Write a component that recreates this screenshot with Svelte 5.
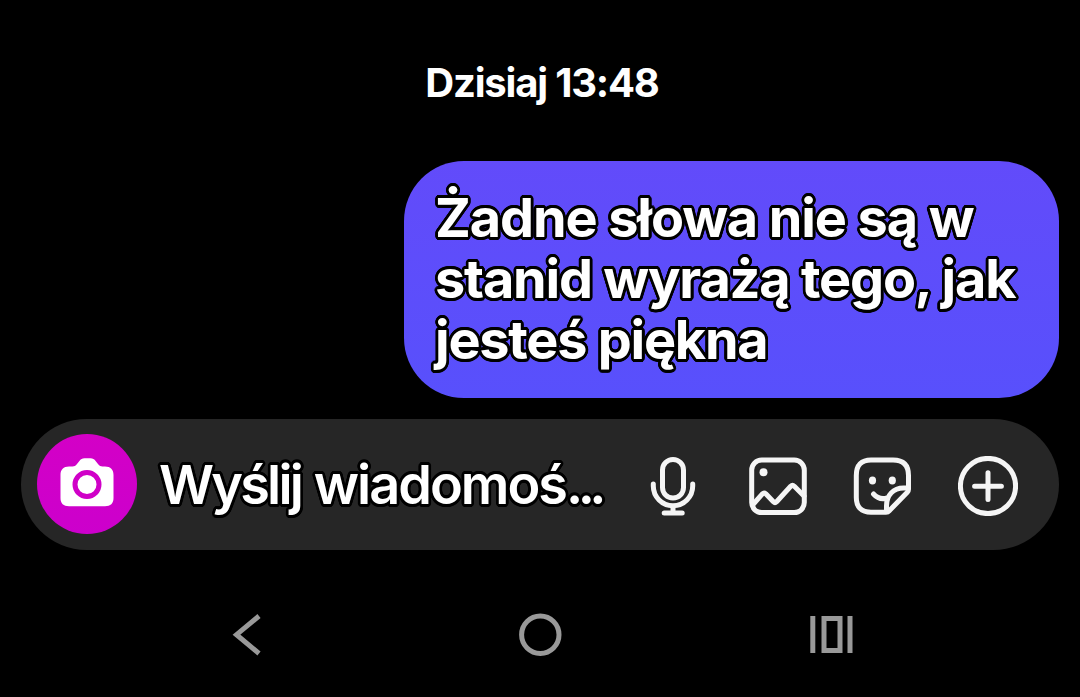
<script>
  // line breaks are fixed, tracking is tuned per line
  const lines = [
    { text: 'Żadne słowa nie są w', tracking: -1.1 },
    { text: 'stanid wyrażą tego, jak', tracking: -1.2 },
    { text: 'jesteś piękna', tracking: -1.25 },
  ];
</script>

<div class="screen">
  <div class="timestamp"><span>Dzisiaj 13:48</span></div>

  <div class="message">
    {#each lines as line}
      <span class="line outlined" style="letter-spacing: {line.tracking}px">{line.text}</span>
    {/each}
  </div>

  <div class="composer">
    <button class="camera" aria-label="Aparat">
      <svg width="54" height="49" viewBox="0 0 54 49">
        <path
          fill="#fff"
          d="M9 8.500h3.500c2 0 3-.5 4.300-2.200l2.400-3C20.800 1.100 22.200.3 24.500.3h6c2.300 0 3.700.8 5.300 3l2.400 3c1.300 1.700 2.300 2.200 4.300 2.200h2.500c5.500 0 8.500 3 8.500 8.500v23c0 5.500-3 8.200-8.500 8.200H9c-5.500 0-8.500-2.700-8.500-8.200V17c0-5.500 3-8.500 8.500-8.500z"
        />
        <circle cx="27" cy="26.500" r="12" fill="none" stroke="#d000c8" stroke-width="5" />
      </svg>
    </button>

    <div class="placeholder outlined"><span class="first">Wyślij</span> wiadomoś<span class="dots">...</span></div>

    <div class="actions">
      <svg width="60" height="60" viewBox="0 0 60 60">
        <rect x="19.500" y="3.500" width="21" height="38.500" rx="10.500" />
        <path d="M10.300 28v2a19.700 19.700 0 0 0 39.400 0v-2M30 50.500v6.500M21.200 57h18" />
      </svg>
      <svg width="60" height="60" viewBox="0 0 60 60">
        <rect x="3.700" y="4" width="52.600" height="52.600" rx="10" />
        <circle class="solid" cx="15.500" cy="16.300" r="4" />
        <path d="M5 48.500l9.400-10.700q1.700-1.500 3.400 0l7.600 8q1.600 1.500 3.200 0L42.700 30.200q1.800-1.700 3.600 0L56 40" />
      </svg>
      <svg width="60" height="60" viewBox="0 0 60 60">
        <path
          d="M18 4h22c10.500 0 15.500 5 15.500 15.500v13.800q0 1.700-1.200 2.900L36.500 54.500q-1.500 1.700-3.500 1.700H18c-9.500 0-14.700-5-14.700-14.700v-22C3.300 9 8.500 4 18 4z"
        />
        <path d="M33.500 55V50c0-11 7-18 17-18h3.500M20.500 38c4 4.500 8.500 5.500 13.500 4" />
        <ellipse class="solid" cx="19.500" cy="24.500" rx="3.600" ry="3.900" />
        <ellipse class="solid" cx="39.300" cy="24.500" rx="3.600" ry="3.900" />
      </svg>
      <svg width="60" height="60" viewBox="0 0 60 60">
        <circle cx="30" cy="30" r="27.600" />
        <path d="M30 16.800v26.800M16.600 30.200h26.800" />
      </svg>
    </div>
  </div>

  <nav class="navbar">
    <svg width="80" height="44" viewBox="0 0 80 44">
      <path d="M50 3L27.500 21.700 50 40.500" />
    </svg>
    <svg width="80" height="44" viewBox="0 0 80 44">
      <circle cx="40.300" cy="21.700" r="18.700" />
    </svg>
    <svg width="80" height="44" viewBox="0 0 80 44">
      <path d="M21.800 3v37M59 3v37M33 5.500h16v32h-16z" />
    </svg>
  </nav>
</div>

<style>
  :global(body) {
    background: #000;
  }

  .screen {
    box-sizing: border-box;
    width: 1080px;
    height: 697px;
    padding: 58px 21px 0;
    display: flex;
    flex-direction: column;
    background: #000;
    color: #fff;
    font-family: Inter, 'Liberation Sans', sans-serif;
    overflow: hidden;
  }

  .timestamp {
    height: 50px;
    padding-left: 4px;
    font-size: 40px;
    line-height: 50px;
    font-weight: 700;
    letter-spacing: -1.2px;
    text-align: center;
  }

  /* round black outline */
  .outlined {
    text-shadow:
      2.8px 0 #000, 2.6px 1.1px #000, 2px 2px #000, 1.1px 2.6px #000,
      0 2.8px #000, -1.1px 2.6px #000, -2px 2px #000, -2.6px 1.1px #000,
      -2.8px 0 #000, -2.6px -1.1px #000, -2px -2px #000, -1.1px -2.6px #000,
      0 -2.8px #000, 1.1px -2.6px #000, 2px -2px #000, 2.6px -1.1px #000;
  }

  .message {
    box-sizing: border-box;
    align-self: flex-end;
    width: 655px;
    height: 237px;
    margin-top: 53px;
    padding: 26px 0 0 31px;
    border-radius: 60px;
    background: linear-gradient(#624bfa, #5850fc);
  }

  .line {
    display: block;
    font-size: 54px;
    line-height: 61px;
    font-weight: 700;
    white-space: nowrap;
  }

  .composer {
    box-sizing: border-box;
    height: 131px;
    margin-top: 21px;
    padding: 0 41px 2px 16px;
    display: flex;
    align-items: center;
    border-radius: 66px;
    background: #262626;
  }

  .camera {
    width: 100px;
    height: 100px;
    padding: 0 0 3px;
    display: flex;
    align-items: center;
    justify-content: center;
    border: none;
    border-radius: 50%;
    background: linear-gradient(#d300c6, #cc00cc);
  }

  .placeholder {
    margin-left: 22px;
    padding-top: 2px;
    font-size: 54px;
    line-height: 64px;
    font-weight: 560;
    letter-spacing: -2px;
    white-space: nowrap;
  }

  .first {
    margin-right: 1px;
    letter-spacing: -2.8px;
  }

  .dots {
    letter-spacing: -5.5px;
  }

  .actions {
    margin-left: auto;
    padding-top: 5px;
    display: flex;
    gap: 45px;
  }

  .actions svg {
    fill: none;
    stroke: #f5f5f5;
    stroke-width: 5;
    stroke-linecap: round;
    stroke-linejoin: round;
  }

  .actions .solid {
    fill: #f5f5f5;
    stroke: none;
  }

  .navbar {
    margin-top: 63px;
    padding: 0 188px;
    display: flex;
    justify-content: space-between;
  }

  .navbar svg {
    fill: none;
    stroke: #999;
    stroke-width: 5;
  }
</style>
